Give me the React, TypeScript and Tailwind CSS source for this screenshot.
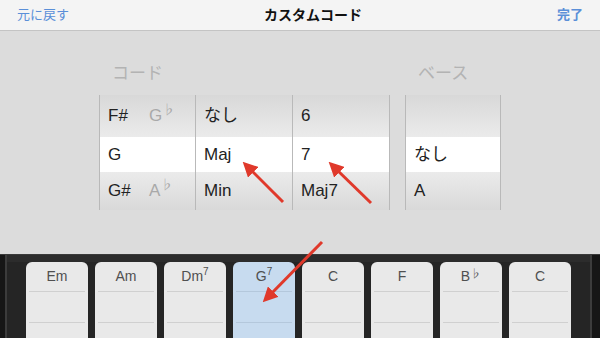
import React from "react";

const jp = { fontFamily: '"Liberation Sans", "Noto Sans CJK JP", sans-serif' };

type Cell = { main: string; alt?: string };

const chordCols: Cell[][] = [
  [{ main: "F#", alt: "G" }, { main: "G" }, { main: "G#", alt: "A" }],
  [{ main: "なし" }, { main: "Maj" }, { main: "Min" }],
  [{ main: "6" }, { main: "7" }, { main: "Maj7" }],
];

const bassCol: Cell[] = [{ main: "" }, { main: "なし" }, { main: "A" }];

const keys = [
  { name: "Em" },
  { name: "Am" },
  { name: "Dm", sup: "7" },
  { name: "G", sup: "7", active: true },
  { name: "C" },
  { name: "F" },
  { name: "B", flat: true },
  { name: "C" },
];

function PickerColumn({ cells, width, border }: { cells: Cell[]; width: string; border: string }) {
  return (
    <div className={`flex flex-col ${width} ${border} border-[#b9b9b9]`}>
      <div className="h-[42px] flex items-center pl-2 bg-gradient-to-b from-[#d8d8d8] to-[#ebebeb]">
        <Label cell={cells[0]} />
      </div>
      <div className="h-[35px] flex items-center pl-2 bg-white">
        <Label cell={cells[1]} />
      </div>
      <div className="h-[38px] flex items-center pl-2 bg-gradient-to-b from-[#ebebeb] to-[#d9d9d9]">
        <Label cell={cells[2]} />
      </div>
    </div>
  );
}

function Label({ cell }: { cell: Cell }) {
  return (
    <div className="flex items-center text-[17px] text-[#222]">
      <span className="w-[41px]">{cell.main}</span>
      {cell.alt && (
        <span className="text-[#a9a9a9] flex items-start">
          <span>{cell.alt}</span>
          <span className="text-[13px] leading-[14px]">♭</span>
        </span>
      )}
    </div>
  );
}

export default function App() {
  return (
    <div className="relative w-[600px] h-[338px] overflow-hidden bg-[#dcdcdc]" style={jp}>
      {/* NAV */}
      <div className="h-[31px] flex items-center justify-between px-[17px] bg-[#f4f4f4] border-b border-[#c4c4c4]">
        <span className="text-[13px] text-[#5a8fd8]">元に戻す</span>
        <span className="text-[14px] font-bold text-[#111]">カスタムコード</span>
        <span className="text-[13px] font-bold text-[#5a8fd8]">完了</span>
      </div>

      {/* PICKER */}
      <div className="h-[223px] pt-[33px] pl-[99px]">
        <div className="flex h-[31px] text-[17px] text-[#b3b3b3] leading-[20px]">
          <span className="w-[306px] pl-[13px]">コード</span>
          <span className="pl-[13px]">ベース</span>
        </div>
        <div className="flex">
          <PickerColumn cells={chordCols[0]} width="w-[97px]" border="border-x" />
          <PickerColumn cells={chordCols[1]} width="w-[97px]" border="border-r" />
          <PickerColumn cells={chordCols[2]} width="w-[97px]" border="border-r" />
          <div className="w-[15px]" />
          <PickerColumn cells={bassCol} width="w-[96px]" border="border-x" />
        </div>
      </div>

      {/* KEYBOARD */}
      <div className="h-[84px] flex bg-[#1f1f1f] border-t border-[#3a3a3a]">
        <div className="w-[7px] bg-[#161616] border-r-2 border-[#3c3c3c]" />
        <div className="flex-1 flex flex-col bg-[#252525]">
          <div className="h-[7px] bg-[#2c2c2c]" />
          <div className="flex-1 flex gap-[7px] pl-[19px]">
            {keys.map((k, i) => (
              <div
                key={i}
                className={`w-[62px] rounded-t-[6px] flex flex-col px-[3px] ${k.active ? "bg-[#c7dbef]" : "bg-[#e9e9e9]"}`}
              >
                <div className="h-[29px] flex items-start justify-center pt-[6px] text-[14px] leading-[16px] text-[#505050]">
                  <span>{k.name}</span>
                  {k.flat && <span className="text-[11px] leading-[12px]">♭</span>}
                  {k.sup && <span className="text-[10px] leading-[10px] -mt-[1px]">{k.sup}</span>}
                </div>
                <div className={`h-[1px] ${k.active ? "bg-[#b4c8dc]" : "bg-[#d0d0d0]"}`} />
                <div className="h-[30px]" />
                <div className={`h-[1px] ${k.active ? "bg-[#b4c8dc]" : "bg-[#d0d0d0]"}`} />
              </div>
            ))}
          </div>
        </div>
        <div className="w-[10px] bg-[#161616] border-l-2 border-[#3c3c3c]" />
      </div>

      {/* ARROWS */}
      <svg className="absolute inset-0 pointer-events-none" width="600" height="338">
        <defs>
          <marker id="ah" markerWidth="5" markerHeight="5" refX="2.5" refY="2.5" orient="auto">
            <path d="M0,0 L5,2.5 L0,5 Z" fill="#e0392b" />
          </marker>
        </defs>
        <line x1="283" y1="202" x2="248" y2="167" stroke="#e0392b" strokeWidth="3" markerEnd="url(#ah)" />
        <line x1="371" y1="203" x2="334" y2="167" stroke="#e0392b" strokeWidth="3" markerEnd="url(#ah)" />
        <line x1="322" y1="242" x2="268" y2="297" stroke="#e0392b" strokeWidth="3" markerEnd="url(#ah)" />
      </svg>
    </div>
  );
}
